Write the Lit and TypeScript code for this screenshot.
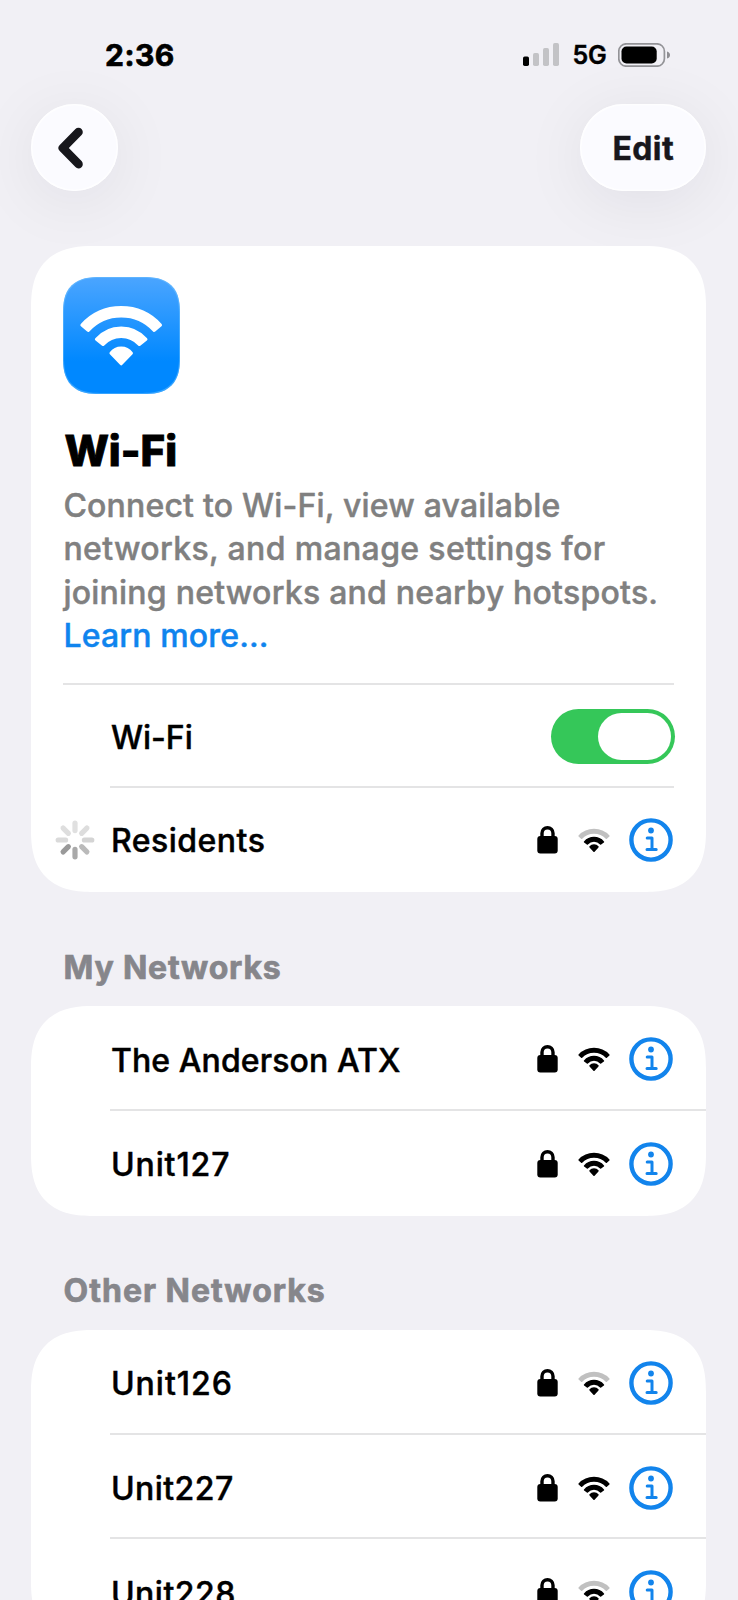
import { LitElement, html, svg, css, nothing } from "lit";
import { customElement, property } from "lit/decorators.js";
import { styleMap } from "lit/directives/style-map.js";

/** Wedge of a ring centred on (cx, cy), opening upwards, inset by r so a round-joined stroke of 2r softens its corners. */
function wedge(cx: number, cy: number, inner: number, outer: number, deg: number, r: number): string {
  const ri = inner > 0 ? inner + r : 0;
  const ro = outer - r;
  const a = (deg * Math.PI) / 180;
  const ao = a - r / ro;
  const pt = (rad: number, ang: number) => `${(cx + rad * Math.sin(ang)).toFixed(2)} ${(cy - rad * Math.cos(ang)).toFixed(2)}`;
  if (ri === 0) {
    return `M${pt(ro, -ao)}A${ro} ${ro} 0 0 1 ${pt(ro, ao)}L${cx} ${cy + outer * 0.33 - r}Z`;
  }
  const ai = a - r / ri;
  return `M${pt(ro, -ao)}A${ro} ${ro} 0 0 1 ${pt(ro, ao)}L${pt(ri, ai)}A${ri} ${ri} 0 0 0 ${pt(ri, -ai)}Z`;
}

const lockIcon = html`<svg width="21" height="28" viewBox="0 0 21 28">
  <path d="M5 12V7.2a5.5 5.5 0 0 1 11 0V12" fill="none" stroke="#000" stroke-width="3.4" />
  <rect x=".3" y="10" width="20.4" height="17.5" rx="3" />
</svg>`;

const wifiIcon = (strength: number) => html`<svg width="34" height="26" viewBox="0 0 34 26">
  ${[
    { d: wedge(17, 23, 16.3, 21.2, 49, 0.8), lit: strength > 2 },
    { d: wedge(17, 23, 8.2, 13.2, 53, 0.8), lit: strength > 1 },
    { d: wedge(17, 23, 0, 5.8, 60, 0.8), lit: true },
  ].map(
    (p) => svg`<path d=${p.d} fill=${p.lit ? "#000" : "#c0c0c0"} stroke=${p.lit ? "#000" : "#c0c0c0"} stroke-width="1.6" stroke-linejoin="round" />`
  )}
</svg>`;

const infoIcon = html`<svg width="44" height="44" viewBox="0 0 44 44">
  <circle cx="22" cy="22" r="19.6" fill="none" stroke="#1284ec" stroke-width="4.4" />
  <circle cx="22" cy="12.5" r="2.9" fill="#1284ec" />
  <path d="M18.2 20H23V31.6M18 31.6H27.2" fill="none" stroke="#1284ec" stroke-width="3" stroke-linecap="round" stroke-linejoin="round" />
</svg>`;

const spinnerShades = ["#e0e0e0", "#dddddd", "#d4d4d4", "#bababa", "#a9a9a9", "#999999", "#dadada", "#dedede"];
const spinnerIcon = html`<svg width="40" height="40" viewBox="-20 -20 40 40">
  ${spinnerShades.map(
    (c, i) => svg`<path d="M0 -9.4V-16.8" transform="rotate(${i * 45})" stroke=${c} stroke-width="5.2" stroke-linecap="round" />`
  )}
</svg>`;

interface Network {
  name: string;
  strength: number;
  spacing: number;
  joining?: boolean;
}

@customElement("network-row")
export class NetworkRow extends LitElement {
  @property({ attribute: false }) network!: Network;

  static styles = css`
    :host {
      display: flex;
      align-items: center;
      height: 100%;
      padding-right: 33.5px;
      box-sizing: border-box;
    }
    svg {
      display: block;
      flex: none;
    }
    .lead {
      width: 79.5px;
      flex: none;
      padding-left: 23.5px;
      box-sizing: border-box;
    }
    .name {
      flex: 1;
      padding-top: 2px;
      white-space: nowrap;
    }
    .icons {
      display: flex;
      align-items: center;
    }
    .wifi {
      margin: 0 18px 0 19px;
    }
  `;

  render() {
    const n = this.network;
    return html`
      <div class="lead">${n.joining ? spinnerIcon : nothing}</div>
      <div class="name" style=${styleMap({ letterSpacing: `${n.spacing}px` })}>${n.name}</div>
      <div class="icons">
        ${lockIcon}
        <div class="wifi">${wifiIcon(n.strength)}</div>
        ${infoIcon}
      </div>
    `;
  }
}

@customElement("app-root")
export class AppRoot extends LitElement {
  private current: Network = { name: "Residents", strength: 2, spacing: 0.5, joining: true };

  private sections: { title: string; spacing: number; items: Network[] }[] = [
    {
      title: "My Networks",
      spacing: 0.8,
      items: [
        { name: "The Anderson ATX", strength: 3, spacing: 0.1 },
        { name: "Unit127", strength: 3, spacing: 0.9 },
      ],
    },
    {
      title: "Other Networks",
      spacing: 1,
      items: [
        { name: "Unit126", strength: 2, spacing: 1 },
        { name: "Unit227", strength: 3, spacing: 0.45 },
        { name: "Unit228", strength: 2, spacing: 0.5 },
      ],
    },
  ];

  private blurb = [
    { text: "Connect to Wi-Fi, view available", spacing: 0.19 },
    { text: "networks, and manage settings for", spacing: 0.35 },
    { text: "joining networks and nearby hotspots.", spacing: 0.24 },
  ];

  static styles = css`
    :host {
      display: block;
      height: 1600px;
      overflow: hidden;
      background: #f1f0f5;
      color: #000;
      font: 500 32px/43.5px Inter, "Liberation Sans", sans-serif;
      -webkit-text-stroke: 0.45px currentColor;
    }
    svg {
      display: block;
    }
    .status {
      display: flex;
      justify-content: space-between;
      align-items: center;
      height: 104px;
      padding: 6px 68.5px 0 105px;
      box-sizing: border-box;
    }
    .time {
      font-size: 30px;
      font-weight: 700;
      letter-spacing: 0.5px;
      padding-top: 1px;
      -webkit-text-stroke-width: 0.7px;
    }
    .indicators {
      display: flex;
      align-items: center;
    }
    .carrier {
      margin: 0 11px 0 12px;
      font-size: 25px;
      font-weight: 600;
      letter-spacing: -0.2px;
      padding-top: 2px;
    }
    .nav {
      display: flex;
      justify-content: space-between;
      height: 87px;
      padding: 0 32px 0 31.4px;
    }
    .pill {
      display: flex;
      align-items: center;
      justify-content: center;
      width: 87px;
      height: 87px;
      border-radius: 43.5px;
      background: #fbfbff;
      box-shadow: inset 0 0 0 1.5px #fefeff, 0 10px 66px rgba(20, 20, 40, 0.075);
      color: #17171c;
    }
    .edit {
      width: 126.5px;
      font-weight: 700;
      letter-spacing: 0.4px;
      padding: 3px 0 0 1px;
      box-sizing: border-box;
    }
    .card {
      position: relative;
      margin: 0 32px 0 31.4px;
      border-radius: 62px;
      corner-shape: superellipse(1.33);
      background: #fff;
      overflow: hidden;
    }
    .main {
      margin-top: 55.4px;
      height: 646px;
    }
    .hero {
      height: 438.5px;
      padding: 31px 32px 0;
      box-sizing: border-box;
      background: linear-gradient(#e4e4e5, #e4e4e5) 32px 100% / 611px 2px no-repeat;
    }
    .tile {
      width: 117px;
      height: 117px;
      border-radius: 37px;
      corner-shape: superellipse(1.4);
      background: linear-gradient(#4ba5ff, #0088ff 72%);
      box-shadow: inset 0 0 0 1px rgba(120, 200, 255, 0.45);
    }
    .title {
      margin: 31.5px 0 0 1px;
      font-size: 42px;
      line-height: 50px;
      font-weight: 800;
      -webkit-text-stroke-width: 0.9px;
    }
    .blurb {
      margin-top: 7.8px;
      color: #808080;
      white-space: nowrap;
    }
    .line {
      display: block;
    }
    .link {
      color: #0f84ee;
      letter-spacing: 0.15px;
    }
    .switch-row {
      display: flex;
      align-items: center;
      justify-content: space-between;
      height: 103px;
      padding: 0 31.5px 0 79.5px;
      box-sizing: border-box;
      background: linear-gradient(#e4e4e5, #e4e4e5) 79px 100% / 564px 2px no-repeat;
    }
    .switch-label {
      padding-top: 2px;
    }
    .switch {
      display: flex;
      justify-content: flex-end;
      width: 124px;
      height: 55px;
      padding: 4px;
      box-sizing: border-box;
      border-radius: 27.5px;
      background: #35c759;
    }
    .knob {
      width: 73px;
      height: 47px;
      border-radius: 23.5px;
      background: #fff;
    }
    .current {
      height: 104.5px;
    }
    .label {
      height: 114px;
      padding: 53.5px 0 0 63.5px;
      box-sizing: border-box;
      color: #86868b;
      font-weight: 700;
      -webkit-text-stroke-width: 0.7px;
    }
    .cell {
      height: 104.75px;
      padding-top: 1px;
      box-sizing: border-box;
      background: linear-gradient(#e4e4e5, #e4e4e5) 79px 100% / 100% 2px no-repeat;
    }
    .cell:last-child {
      background: none;
    }
  `;

  render() {
    return html`
      <div class="status">
        <div class="time">2:36</div>
        <div class="indicators">
          <svg width="37" height="24" viewBox="0 0 37 24">
            <rect x="0" y="13.5" width="6" height="9.5" rx="1.7" />
            <rect x="10" y="10" width="6" height="13" rx="1.7" fill="#c3c3c6" />
            <rect x="20" y="5" width="6" height="18" rx="1.7" fill="#c3c3c6" />
            <rect x="30" y="0" width="6" height="23" rx="1.7" fill="#c3c3c6" />
          </svg>
          <div class="carrier">5G</div>
          <svg width="52" height="24" viewBox="0 0 52 24">
            <rect x=".8" y=".8" width="45.6" height="22.4" rx="7.5" fill="none" stroke="#939397" stroke-width="1.7" />
            <rect x="3.5" y="3.5" width="35.2" height="17" rx="5" />
            <path d="M49 8.5q3 1 3 3.5t-3 3.5z" fill="#8e8e92" />
          </svg>
        </div>
      </div>
      <div class="nav">
        <div class="pill">
          <svg width="87" height="87" viewBox="0 0 87 87">
            <path d="M47.5 28.1L31.8 44.1L47.5 60.1" fill="none" stroke="#17171c" stroke-width="8.6" stroke-linecap="round" stroke-linejoin="round" />
          </svg>
        </div>
        <div class="pill edit">Edit</div>
      </div>
      <div class="card main">
        <div class="hero">
          <div class="tile">
            <svg width="117" height="117" viewBox="0 0 117 117">
              ${[wedge(58.2, 83.6, 43.2, 54.6, 49.5, 1.6), wedge(58.2, 83.6, 22.7, 34.2, 52, 1.6), wedge(58.2, 83.6, 0, 14.2, 61, 1.6)].map(
                (d) => svg`<path d=${d} fill="#fff" stroke="#fff" stroke-width="3.2" stroke-linejoin="round" />`
              )}
            </svg>
          </div>
          <div class="title">Wi-Fi</div>
          <div class="blurb">
            ${this.blurb.map((l) => html`<span class="line" style=${styleMap({ letterSpacing: `${l.spacing}px` })}>${l.text}</span>`)}
            <span class="line link">Learn more...</span>
          </div>
        </div>
        <div class="switch-row">
          <div class="switch-label">Wi-Fi</div>
          <div class="switch"><div class="knob"></div></div>
        </div>
        <div class="current"><network-row .network=${this.current}></network-row></div>
      </div>
      ${this.sections.map(
        (s) => html`
          <div class="label" style=${styleMap({ letterSpacing: `${s.spacing}px` })}>${s.title}</div>
          <div class="card">
            ${s.items.map((n) => html`<div class="cell"><network-row .network=${n}></network-row></div>`)}
          </div>
        `
      )}
    `;
  }
}
